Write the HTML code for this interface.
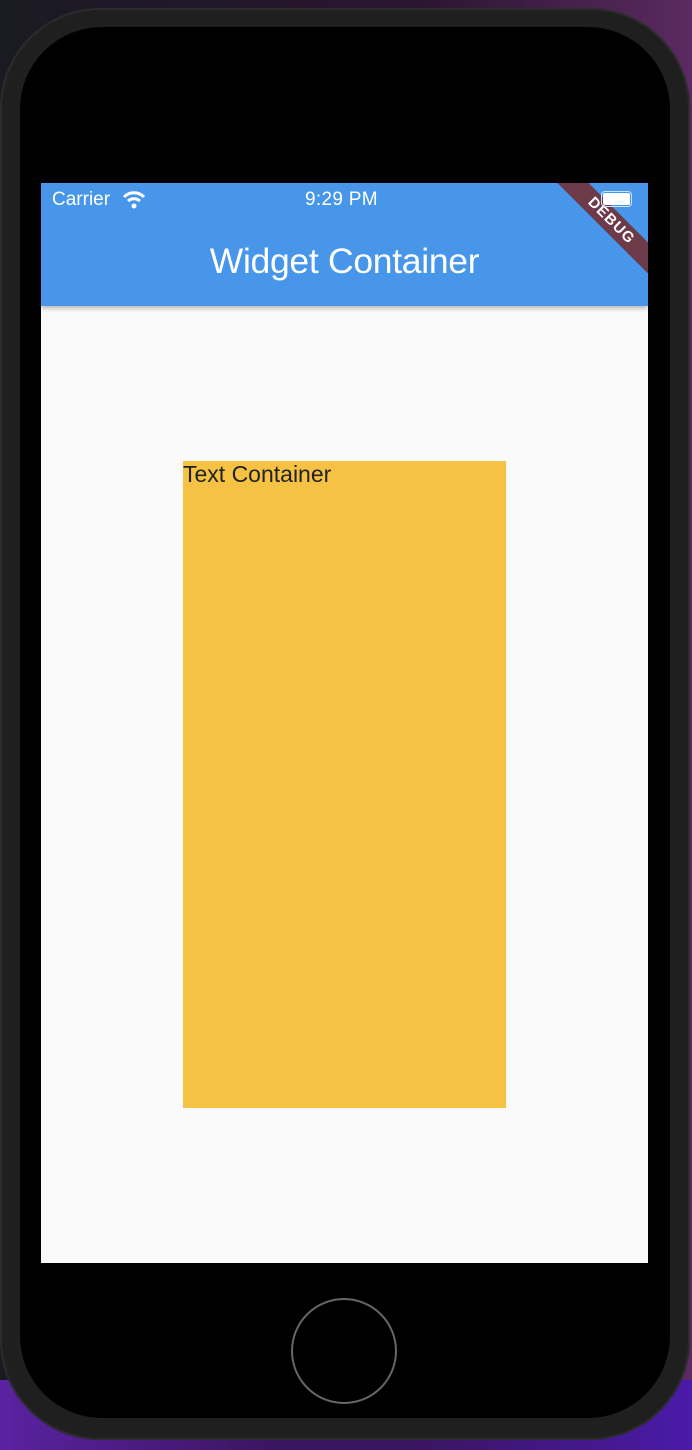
<!DOCTYPE html>
<html><head><style>
body{margin:0;width:692px;height:1450px;overflow:hidden;background:linear-gradient(90deg,#1a1a22 0%,#2a1530 60%,#5a2a60 100%);position:relative;font-family:"Liberation Sans",sans-serif}
.bot{position:absolute;left:0;top:1380px;width:692px;height:70px;background:linear-gradient(90deg,#5a22a0,#3a1560 40%,#3a1560 60%,#4a1aa8)}
.phone{position:absolute;left:0;top:8px;width:690px;height:1432px;border-radius:100px;background:#1f1f1f;box-shadow:inset 0 0 0 2px #2c2c2c}
.bez{position:absolute;left:20px;top:27px;width:650px;height:1391px;border-radius:82px;background:#000}
.screen{position:absolute;left:41px;top:183px;width:607px;height:1080px;background:#fafafa;overflow:hidden}
.bar{position:absolute;left:0;top:0;width:607px;height:123px;background:#4796e9;box-shadow:0 2px 5px rgba(0,0,0,.3);color:#fff;overflow:hidden}
.box{position:absolute;left:142px;top:278px;width:323px;height:647px;background:#f5c244;font-size:23px;color:#222;line-height:26px}
.home{position:absolute;left:291px;top:1298px;width:106px;height:106px;border-radius:50%;border:2px solid #666;box-sizing:border-box}
.rib{position:absolute;left:490px;top:27px;width:160px;height:22px;background:#6d3a4a;transform:rotate(45deg);color:#fff;font-weight:bold;font-size:15px;text-align:center;line-height:22px;letter-spacing:1px}
</style></head><body>
<div class="bot"></div>
<div class="phone"></div>
<div class="bez"></div>
<div class="screen">
<div class="bar">
<div class="rib">DEBUG</div>
<div style="position:absolute;left:11px;top:6px;font-size:19px">Carrier</div>
<svg style="position:absolute;left:81px;top:8px" width="24" height="18" viewBox="0 0 24 18"><path d="M2 6 A14 14 0 0 1 22 6" stroke="#fff" stroke-width="3" fill="none"/><path d="M6 10 A9 9 0 0 1 18 10" stroke="#fff" stroke-width="3" fill="none"/><circle cx="12" cy="15" r="2.5" fill="#fff"/></svg>
<div style="position:absolute;left:264px;top:6px;font-size:19px;letter-spacing:0.3px">9:29 PM</div>
<div style="position:absolute;left:560px;top:8px;width:31px;height:16px;border:1px solid #cfe3f8;border-radius:4px;box-sizing:border-box;padding:1px"><div style="background:#fff;width:100%;height:100%;border-radius:2px"></div></div>
<div style="position:absolute;left:0;width:607px;top:58px;text-align:center;font-size:35.5px;letter-spacing:-0.3px">Widget Container</div>
</div>
<div class="box">Text Container</div>
</div>
<div class="home"></div>
</body></html>
